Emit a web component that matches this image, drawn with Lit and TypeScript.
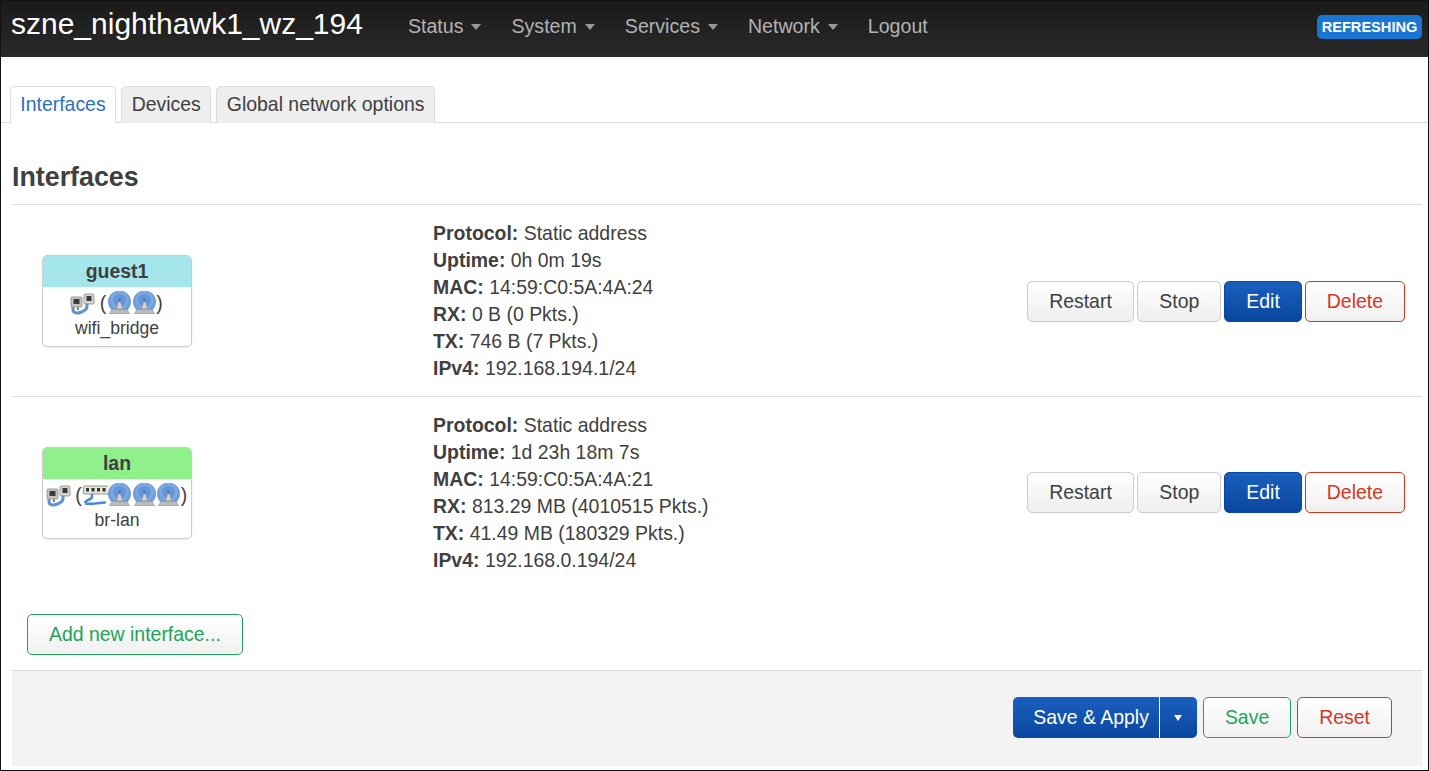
import { LitElement, html, css } from "lit";
import { customElement } from "lit/decorators.js";

const bridge = () => html`<svg class="ico" width="25" height="23" viewBox="0 0 25 23">
  <rect x="1" y="5" width="11" height="10" rx="1" fill="#c4c4c4" stroke="#8a8a8a" stroke-width=".8"/>
  <rect x="3.500" y="7" width="6" height="5" fill="#3a3a3a"/>
  <rect x="14" y="2" width="10" height="10" rx="1" fill="#d6d6d6" stroke="#8a8a8a" stroke-width=".8"/>
  <rect x="16.500" y="4" width="5" height="5" fill="#3a3a3a"/>
  <path d="M3 15v3c0 3 4 3.500 7 2.500s7-3 7-6v-3" fill="none" stroke="#5c92d6" stroke-width="3"/>
  <path d="M8 15v3" stroke="#7a8aa0" stroke-width="2"/>
</svg>`;

const wifi = () => html`<svg class="ico" width="25" height="24" viewBox="0 0 25 24">
  <defs><radialGradient id="w" cx=".5" cy=".42" r=".55">
    <stop offset="0" stop-color="#8fb4e6"/><stop offset=".35" stop-color="#5c90d6"/>
    <stop offset=".62" stop-color="#84ace2"/><stop offset=".85" stop-color="#6697d8"/><stop offset="1" stop-color="#8eb0e2"/>
  </radialGradient></defs>
  <circle cx="12.500" cy="11" r="11.500" fill="url(#w)"/>
  <path d="M12.500 8 16 18H9Z" fill="#cfd5dc" stroke="#858b94" stroke-width=".8"/>
  <circle cx="12.500" cy="9" r="2" fill="#4a80c8"/>
  <path d="M5 18.500h15l2.500 4H2.500Z" fill="#bdbdbd" stroke="#969696" stroke-width=".7"/>
</svg>`;

const sw = () => html`<svg class="ico" width="25" height="24" viewBox="0 0 25 24">
  <rect x=".5" y="3" width="26" height="8" rx="1" fill="#e8e8d8" stroke="#777" stroke-width=".8"/>
  <rect x="3" y="5" width="3" height="3.500" fill="#333"/>
  <rect x="8.500" y="5" width="3" height="3.500" fill="#333"/>
  <rect x="14" y="5" width="3" height="3.500" fill="#333"/>
  <rect x="19.500" y="5" width="3" height="3.500" fill="#333"/>
  <path d="M9 11v3c0 3-6 2-7 6M2 20.500c7 1.500 13-1 21-1" fill="none" stroke="#4f8ad0" stroke-width="2.600"/>
</svg>`;

type Iface = {
  name: string; color: string; dev: string; icons: unknown;
  uptime: string; mac: string; rx: string; tx: string; ip: string;
};

const rows: Iface[] = [
  { name: "guest1", color: "cyan", dev: "wifi_bridge", icons: html`${wifi()}${wifi()}`,
    uptime: "0h 0m 19s", mac: "14:59:C0:5A:4A:24", rx: "0 B (0 Pkts.)", tx: "746 B (7 Pkts.)", ip: "192.168.194.1/24" },
  { name: "lan", color: "green", dev: "br-lan", icons: html`${sw()}${wifi()}${wifi()}${wifi()}`,
    uptime: "1d 23h 18m 7s", mac: "14:59:C0:5A:4A:21", rx: "813.29 MB (4010515 Pkts.)", tx: "41.49 MB (180329 Pkts.)", ip: "192.168.0.194/24" },
];

@customElement("app-root")
export class AppRoot extends LitElement {
  static styles = css`
    :host { display: block; font-family: "Liberation Sans", Arial, sans-serif; font-size: 19.45px; color: #404040; }
    * { box-sizing: border-box; }
    .page { height: 771px; border: 1px solid #111; border-top: 0; background: #fff; display: flex; flex-direction: column; overflow: hidden; }
    header { height: 57px; flex: none; display: flex; align-items: center; background: linear-gradient(#1a1a1a, #2a2a2a); border-top: 1px solid #111; padding: 0 6px 6px 10px; }
    .brand { font-size: 30px; color: #fff; margin-right: 45px; margin-bottom: 4px; line-height: 40px; }
    nav { display: flex; gap: 30px; flex: 1; color: #b3b3b3; font-size: 19.6px; }
    .item { display: flex; align-items: center; gap: 8px; }
    .caret { width: 0; height: 0; border: 5.500px solid transparent; border-top: 6px solid #999; border-bottom: 0; margin-top: 2px; }
    .badge { background: #1976d2; color: #fff; font-weight: 700; font-size: 14.600px; line-height: 24px; height: 24px; width: 105px; text-align: center; border-radius: 5px; margin-top: 2px; }
    main { flex: 1; padding: 29px 6px 4px 11px; display: flex; flex-direction: column; }
    .tabs { display: flex; gap: 5.400px; height: 37px; border-bottom: 1px solid #ddd; margin-left: -11px; margin-right: -6px; padding-left: 9px; }
    .tab { height: 37px; padding: 0 9.300px; line-height: 35px; border: 1px solid #ddd; border-bottom: 0; border-radius: 5px 5px 0 0; background: #eee; }
    .tab.active { background: #fff; color: #2e6fbd; }
    h2 { font-size: 26.800px; font-weight: 700; margin: 37px 0 0; line-height: 35px; height: 44px; color: #404040; }
    .row { display: grid; grid-template-columns: 421px 1fr auto; align-items: center; border-top: 1px solid #ddd; height: 192px; padding: 0 17px 0 0; }
    .card { margin-left: 30px; width: 150px; height: 92px; border: 1px solid #ccc; border-radius: 5px; overflow: hidden; text-align: center; box-shadow: 0 1px 2px rgba(0,0,0,.08); background: #fff; }
    .card .head { height: 31px; font-weight: 700; line-height: 31px; }
    .head.cyan { background: #a5e6ed; }
    .head.green { background: #90f08c; }
    .devs { display: flex; justify-content: center; align-items: center; height: 33px; }
    .ico { display: block; flex: none; filter: blur(.6px); margin-right: -.5px; }
    .paren { margin: 0 1px 0 0; }
    .paren.open { margin: 0 1px 0 5px; }
    .ifname { font-size: 17.600px; line-height: 22px; margin-top: -3px; }
    .info { line-height: 27px; }
    .btns { display: flex; gap: 3px; }
    .first .btns { margin-top: 2px; }
    .btn { height: 41px; line-height: 39px; padding: 0 21px; border-radius: 5px; border: 1px solid #ccc; background: linear-gradient(#fff, #eee); color: #404040; white-space: nowrap; }
    .btns .btn:first-child { padding: 0 21.500px; }
    .btn.primary { background: linear-gradient(#1a5fbd, #0a47a0); border-color: #0a47a0; color: #fff; }
    .btn.neg { background: linear-gradient(#fff, #f0f0f0); border-color: #d9341f; color: #d9341f; }
    .btn.pos { background: linear-gradient(#fff, #f0f0f0); border-color: #22a35b; color: #22a35b; }
    .add { margin: 26px 0 15px 15px; align-self: flex-start; }
    .foot { flex: 1; display: flex; justify-content: flex-end; gap: 6px; padding: 26px 30px 0 0; background: #f3f3f3; border-top: 1px solid #ddd; }
    .split { display: flex; height: 41px; border-radius: 5px; background: linear-gradient(#1a5fbd, #0a47a0); color: #fff; line-height: 41px; }
    .split .main { padding: 0 10px 0 20px; border-right: 1px solid #fff; }
    .split .more { width: 37px; display: flex; align-items: center; justify-content: center; }
    .more i { border: 4px solid transparent; border-top: 6px solid #fff; border-bottom: 0; }
  `;

  render() {
    return html`<div class="page">
      <header>
        <div class="brand">szne_nighthawk1_wz_194</div>
        <nav>
          ${["Status", "System", "Services", "Network"].map((n) => html`<div class="item">${n}<span class="caret"></span></div>`)}
          <div class="item">Logout</div>
        </nav>
        <div class="badge">REFRESHING</div>
      </header>
      <main>
        <div class="tabs">
          <div class="tab active">Interfaces</div>
          <div class="tab">Devices</div>
          <div class="tab">Global network options</div>
        </div>
        <h2>Interfaces</h2>
        ${rows.map((r, i) => html`<div class="row ${i === 0 ? "first" : ""}">
          <div class="card">
            <div class="head ${r.color}">${r.name}</div>
            <div class="devs">${bridge()}<span class="paren open">(</span>${r.icons}<span class="paren">)</span></div>
            <div class="ifname">${r.dev}</div>
          </div>
          <div class="info">
            <div><b>Protocol:</b> Static address</div>
            <div><b>Uptime:</b> ${r.uptime}</div>
            <div><b>MAC:</b> ${r.mac}</div>
            <div><b>RX:</b> ${r.rx}</div>
            <div><b>TX:</b> ${r.tx}</div>
            <div><b>IPv4:</b> ${r.ip}</div>
          </div>
          <div class="btns">
            <div class="btn">Restart</div>
            <div class="btn">Stop</div>
            <div class="btn primary">Edit</div>
            <div class="btn neg">Delete</div>
          </div>
        </div>`)}
        <div class="btn pos add">Add new interface...</div>
        <div class="foot">
          <div class="split"><div class="main">Save &amp; Apply</div><div class="more"><i></i></div></div>
          <div class="btn pos">Save</div>
          <div class="btn neg">Reset</div>
        </div>
      </main>
    </div>`;
  }
}
